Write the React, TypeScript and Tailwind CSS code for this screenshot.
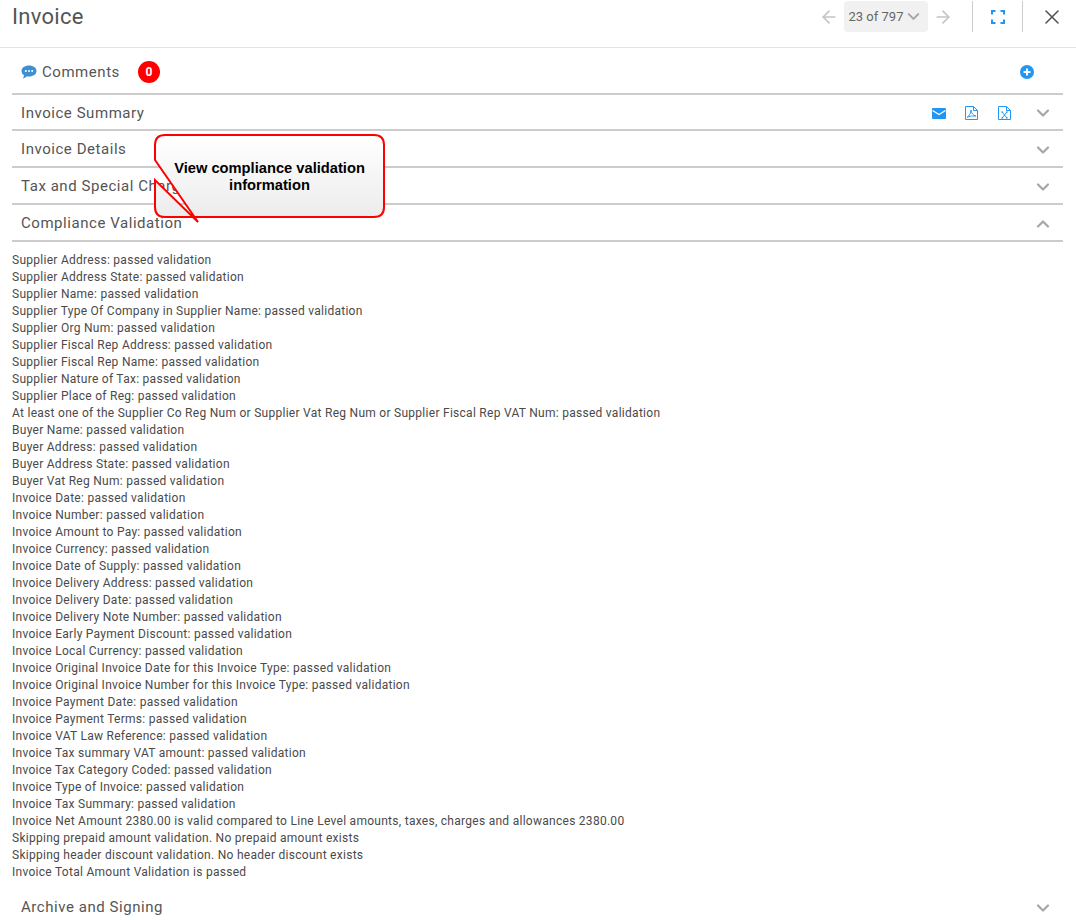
import { ArrowLeft, ArrowRight, ChevronDown, ChevronUp, X } from "lucide-react";

const lines = [
  "Supplier Address: passed validation",
  "Supplier Address State: passed validation",
  "Supplier Name: passed validation",
  "Supplier Type Of Company in Supplier Name: passed validation",
  "Supplier Org Num: passed validation",
  "Supplier Fiscal Rep Address: passed validation",
  "Supplier Fiscal Rep Name: passed validation",
  "Supplier Nature of Tax: passed validation",
  "Supplier Place of Reg: passed validation",
  "At least one of the Supplier Co Reg Num or Supplier Vat Reg Num or Supplier Fiscal Rep VAT Num: passed validation",
  "Buyer Name: passed validation",
  "Buyer Address: passed validation",
  "Buyer Address State: passed validation",
  "Buyer Vat Reg Num: passed validation",
  "Invoice Date: passed validation",
  "Invoice Number: passed validation",
  "Invoice Amount to Pay: passed validation",
  "Invoice Currency: passed validation",
  "Invoice Date of Supply: passed validation",
  "Invoice Delivery Address: passed validation",
  "Invoice Delivery Date: passed validation",
  "Invoice Delivery Note Number: passed validation",
  "Invoice Early Payment Discount: passed validation",
  "Invoice Local Currency: passed validation",
  "Invoice Original Invoice Date for this Invoice Type: passed validation",
  "Invoice Original Invoice Number for this Invoice Type: passed validation",
  "Invoice Payment Date: passed validation",
  "Invoice Payment Terms: passed validation",
  "Invoice VAT Law Reference: passed validation",
  "Invoice Tax summary VAT amount: passed validation",
  "Invoice Tax Category Coded: passed validation",
  "Invoice Type of Invoice: passed validation",
  "Invoice Tax Summary: passed validation",
  "Invoice Net Amount 2380.00 is valid compared to Line Level amounts, taxes, charges and allowances 2380.00",
  "Skipping prepaid amount validation. No prepaid amount exists",
  "Skipping header discount validation. No header discount exists",
  "Invoice Total Amount Validation is passed",
];

const MailIcon = () => (
  <svg className="mr-[-1px]" width="14" height="11" viewBox="0 0 14 11">
    <rect width="14" height="11" rx="1" fill="#2196f3" />
    <path d="M0.5 2.5 L7 6.5 L13.5 2.5" fill="none" stroke="#fff" strokeWidth="1.2" />
  </svg>
);

const FileIcon = ({ label }: { label: "pdf" | "x" }) => (
  <svg width="13" height="14" viewBox="0 0 13 14" fill="none" stroke="#2196f3">
    <path d="M0.5 0.5 H8.5 L12.5 4.5 V13.5 H0.5 Z" />
    <path d="M8.5 0.5 V4.5 H12.5" />
    {label === "pdf" ? (
      <path d="M2 11.5 C4.5 10 6 6.5 6 4 C6.2 7 8 9.5 11 10 C8 9.8 4.5 10 2 11.5 Z" strokeWidth="0.9" />
    ) : (
      <path d="M4 6 L9 12 M9 6 L4 12 M3.2 6 H5.2 M7.8 6 H9.8 M3.2 12 H5.2 M7.8 12 H9.8" strokeWidth="1" />
    )}
  </svg>
);

const Section = ({
  title,
  open = false,
  first = false,
  children,
}: {
  title: string;
  open?: boolean;
  first?: boolean;
  children?: React.ReactNode;
}) => (
  <div className={`flex items-center pt-[2px] pl-[9px] pr-[10px] border-b-2 border-[#ccc] ${first ? "h-[36px]" : "h-[37px]"}`}>
    <span className="text-[15px] tracking-[0.55px] text-[#555]">{title}</span>
    <div className="flex items-center ml-auto">
      {children}
      {open ? (
        <ChevronUp size={20} strokeWidth={2.6} className="text-[#a6a6a6]" />
      ) : (
        <ChevronDown size={20} strokeWidth={2.6} className="text-[#a6a6a6]" />
      )}
    </div>
  </div>
);

const App = () => {
  return (
    <div className="relative w-[1076px] h-[920px] overflow-hidden bg-white font-['Roboto',sans-serif]">
      <div className="flex items-center h-[48px] pl-3 pr-[12px] pb-[14px] border-b border-[#e3e3e3]">
        <h1 className="text-[22px] tracking-[0.3px] text-[#555]">Invoice</h1>
        <div className="flex items-center ml-auto">
          <ArrowLeft size={20} className="text-[#c4c4c4]" />
          <div className="flex items-center justify-center w-[84px] h-[31px] ml-[5px] mr-[5px] bg-[#f1f1f1] rounded-sm text-[13px] text-[#666]">
            23 of 797
            <ChevronDown size={19} strokeWidth={2.6} className="ml-[1px] text-[#a6a6a6]" />
          </div>
          <ArrowRight size={20} className="text-[#c4c4c4]" />
          <div className="w-px h-[31px] ml-[19px] bg-[#ccc]" />
          <svg className="ml-[18px] mr-[17px]" width="14" height="14" viewBox="0 0 14 14" fill="none" stroke="#2196f3" strokeWidth="2">
            <path d="M1 4.5 V1 H4.5 M9.5 1 H13 V4.5 M13 9.5 V13 H9.5 M4.5 13 H1 V9.5" />
          </svg>
          <div className="w-px h-[31px] bg-[#ccc]" />
          <X size={24} strokeWidth={1.6} className="ml-[17px] text-[#555]" />
        </div>
      </div>

      <div className="mx-3 w-[1051px]">
        <div className="flex items-center h-[47px] pt-[2px] pl-[9px] pr-[29px] border-b-2 border-[#ccc]">
          <svg width="16" height="14" viewBox="0 0 16 14">
            <path d="M8 0.5 C12.2 0.5 15.5 2.8 15.5 6 C15.5 9.2 12.2 11.5 8 11.5 C7.2 11.5 6.5 11.4 5.8 11.3 C4.6 12.6 3 13.5 1.5 13.5 C2.4 12.6 3 11.5 3.1 10.3 C1.4 9.3 0.5 7.8 0.5 6 C0.5 2.8 3.8 0.5 8 0.5 Z" fill="#3f8fd2" />
            <circle cx="4.8" cy="6" r="1" fill="#fff" />
            <circle cx="8" cy="6" r="1" fill="#fff" />
            <circle cx="11.2" cy="6" r="1" fill="#fff" />
          </svg>
          <span className="relative top-px ml-[5px] text-[15px] tracking-[0.55px] text-[#555]">Comments</span>
          <span className="flex items-center justify-center w-[22px] h-[22px] ml-[18px] rounded-full bg-[#f00] text-[12px] font-bold text-white">
            0
          </span>
          <svg className="ml-auto" width="14" height="14" viewBox="0 0 14 14">
            <circle cx="7" cy="7" r="7" fill="#2196f3" />
            <path d="M3.5 7 H10.5 M7 3.5 V10.5" stroke="#fff" strokeWidth="2" />
          </svg>
        </div>

        <Section title="Invoice Summary" first>
          <div className="flex items-center gap-[20px] mr-[22px]">
            <MailIcon />
            <FileIcon label="pdf" />
            <FileIcon label="x" />
          </div>
        </Section>
        <Section title="Invoice Details" />
        <Section title="Tax and Special Charges" />
        <Section title="Compliance Validation" open />

        <div className="pt-[10px] text-[12px] tracking-[0.275px] leading-[17px] text-[#4a4a4a]">
          {lines.map((line) => (
            <div key={line}>{line}</div>
          ))}
        </div>

        <div className="flex items-center h-[37px] mt-[8px] pl-[9px] pr-[10px]">
          <span className="text-[15px] tracking-[0.55px] text-[#555]">Archive and Signing</span>
          <ChevronDown size={20} strokeWidth={2.6} className="ml-auto text-[#a6a6a6]" />
        </div>
      </div>

      {/* callout over the rows, the wedge is left open so the row shows through */}
      <div className="absolute left-[150px] top-[130px] w-[240px] h-[96px]">
        <svg className="absolute inset-0" width="240" height="96" viewBox="0 0 240 96">
          <defs>
            <linearGradient id="callout" x1="0" y1="0" x2="0" y2="1">
              <stop offset="0" stopColor="#ffffff" />
              <stop offset="1" stopColor="#ebebeb" />
            </linearGradient>
          </defs>
          <path
            d="M15 5 H224 Q234 5 234 15 V77 Q234 87 224 87 H15 Q5 87 5 77 V50 L48 92 L5 30 V15 Q5 5 15 5 Z"
            fill="url(#callout)"
            stroke="#f00"
            strokeWidth="2"
          />
        </svg>
        <div className="absolute left-[5px] top-[30px] w-[229px] text-center font-['Liberation_Sans',sans-serif] text-[14.7px] leading-[17px] font-bold text-black">
          View compliance validation
          <br />
          information
        </div>
      </div>
    </div>
  );
};

export default App;
